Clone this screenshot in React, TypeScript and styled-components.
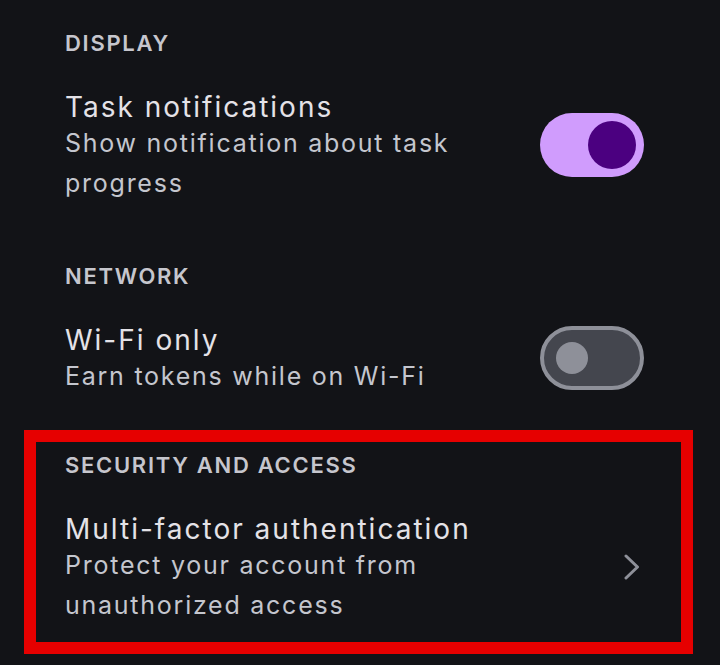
import styled, { createGlobalStyle } from "styled-components";

const GlobalStyle = createGlobalStyle`
  html, body {
    margin: 0;
    padding: 0;
    background: #121317;
  }
  body {
    font-family: "Inter", "Roboto", "Noto Sans", sans-serif;
    -webkit-font-smoothing: antialiased;
  }
`;

const Page = styled.main`
  width: 720px;
  min-height: 665px;
  padding-top: 29px;
  box-sizing: border-box;
  background: #121317;
  overflow: hidden;
`;

const Section = styled.section<{ $boxed?: boolean; $top?: number }>`
  margin-top: ${(p) => p.$top ?? 0}px;
  ${(p) =>
    p.$boxed
      ? `
    margin-left: 24px;
    margin-right: 27px;
    border: 12px solid #e60000;
    padding: 9px 37px 17px 29px;
  `
      : `
    padding: 0 76px 0 65px;
  `}
`;

const Heading = styled.h2`
  margin: 0;
  font-size: 22px;
  line-height: 28px;
  font-weight: 600;
  letter-spacing: 1.7px;
  text-transform: uppercase;
  color: #c6c6cd;
`;

const Row = styled.div`
  display: flex;
  align-items: center;
  gap: 16px;
  padding-top: 34px;
`;

const Texts = styled.div`
  flex: 1;
  min-width: 0;
`;

const Title = styled.div`
  font-size: 28px;
  line-height: 32px;
  font-weight: 400;
  letter-spacing: 2px;
  color: #e4e2e7;
`;

const Subtitle = styled.div`
  font-size: 25px;
  line-height: 40px;
  font-weight: 400;
  letter-spacing: 1.75px;
  color: #c4c6ce;
`;

const Trailing = styled.div`
  width: 104px;
  flex: none;
  display: flex;
  justify-content: flex-end;
  align-items: center;
  margin-bottom: 5px;
`;

const Track = styled.div<{ $on: boolean }>`
  position: relative;
  width: 104px;
  height: 64px;
  box-sizing: border-box;
  border-radius: 32px;
  background: ${(p) => (p.$on ? "#d09cfd" : "#44464e")};
  border: ${(p) => (p.$on ? "none" : "4px solid #8e9099")};
`;

const Thumb = styled.span<{ $on: boolean }>`
  position: absolute;
  border-radius: 50%;
  ${(p) =>
    p.$on
      ? `
    width: 48px;
    height: 48px;
    top: 8px;
    right: 8px;
    background: #4b0080;
  `
      : `
    width: 32px;
    height: 32px;
    top: 12px;
    left: 12px;
    background: #8e9099;
  `}
`;

const Chevron = styled.svg`
  margin-right: 4px;
  display: block;
`;

const Switch = ({ on }: { on: boolean }) => (
  <Track $on={on} role="switch" aria-checked={on}>
    <Thumb $on={on} />
  </Track>
);

const App = () => {
  return (
    <>
      <GlobalStyle />
      <Page>
        <Section>
          <Heading>Display</Heading>
          <Row>
            <Texts>
              <Title>Task notifications</Title>
              <Subtitle>Show notification about task progress</Subtitle>
            </Texts>
            <Trailing>
              <Switch on />
            </Trailing>
          </Row>
        </Section>

        <Section $top={59}>
          <Heading>Network</Heading>
          <Row>
            <Texts>
              <Title>Wi-Fi only</Title>
              <Subtitle>Earn tokens while on Wi-Fi</Subtitle>
            </Texts>
            <Trailing>
              <Switch on={false} />
            </Trailing>
          </Row>
        </Section>

        <Section $boxed $top={34}>
          <Heading>Security and access</Heading>
          <Row>
            <Texts>
              <Title>Multi-factor authentication</Title>
              <Subtitle>Protect your account from unauthorized access</Subtitle>
            </Texts>
            <Trailing>
              <Chevron width="16" height="26" viewBox="0 0 16 26" fill="none">
                <polyline
                  points="2,2 13.5,13 2,24"
                  stroke="#8e9099"
                  strokeWidth="3"
                  strokeLinecap="round"
                  strokeLinejoin="round"
                />
              </Chevron>
            </Trailing>
          </Row>
        </Section>
      </Page>
    </>
  );
};

export default App;
